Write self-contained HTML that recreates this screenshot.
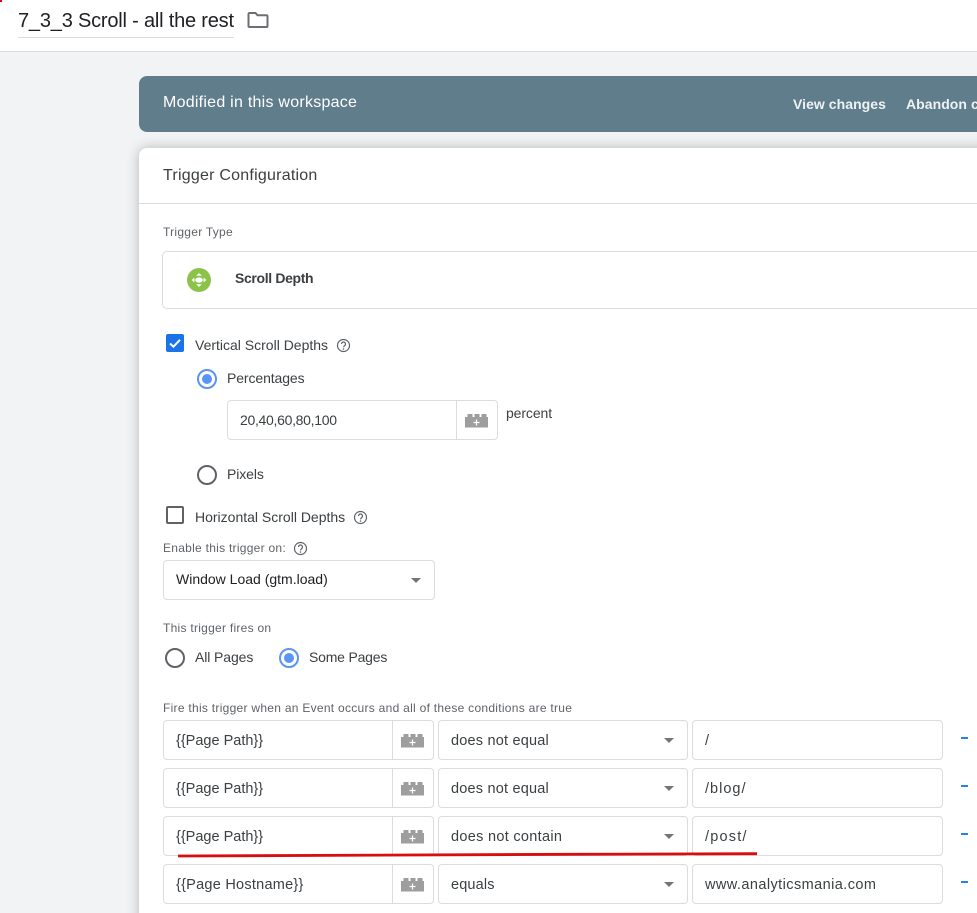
<!DOCTYPE html>
<html><head><meta charset="utf-8">
<style>
html,body{margin:0;padding:0;width:977px;height:913px;overflow:hidden;background:#f1f3f4;font-family:"Liberation Sans",Arial,sans-serif;color:#202124}
#p{position:relative;width:977px;height:913px;overflow:hidden;background:#f1f3f4}
.a{position:absolute;white-space:nowrap}
.t{font-size:14px;line-height:18px;color:#3c4043;letter-spacing:-.1px}
.r{font-size:14.5px;line-height:18px;color:#3c4043;letter-spacing:0}
.lbl{font-size:12px;line-height:14px;color:#5f6368;letter-spacing:.27px}
.box{position:absolute;box-sizing:border-box;border:1px solid #dadce0;border-radius:4px;background:#fff}
.arrow{position:absolute;width:0;height:0;border-left:5px solid transparent;border-right:5px solid transparent;border-top:5px solid #757575}
.minus{position:absolute;left:961px;width:7px;height:2px;background:#2d7de8}
.radio{position:absolute;box-sizing:border-box;width:20px;height:20px;border:2px solid #5f6368;border-radius:50%;background:#fff}
.radio.on{border-color:#5a95f5}
.radio.on:after{content:"";position:absolute;left:3px;top:3px;width:10px;height:10px;border-radius:50%;background:#5a95f5}
svg{position:absolute;display:block}
</style></head><body><div id="p">
<div class="a" style="left:0;top:0;width:977px;height:52px;background:#fff;border-bottom:1px solid #dadce0;box-sizing:border-box"></div>
<div class="a" style="left:0;top:0;width:2px;height:2px;background:#e00"></div>
<div class="a" style="left:18px;top:8px;font-size:20px;line-height:26px;color:#202124;letter-spacing:-.2px">7_3_3 Scroll - all the rest</div>
<div class="a" style="left:18px;top:37px;width:216px;height:1px;background:#dadce0"></div>
<svg style="left:247px;top:11px" width="22" height="18" viewBox="0 0 22 18"><path d="M2.500 2h6l2 2.200h9a1 1 0 0 1 1 1V15a1 1 0 0 1-1 1h-17a1 1 0 0 1-1-1V3a1 1 0 0 1 1-1z" fill="none" stroke="#6b6e72" stroke-width="2"/></svg>

<div class="a" style="left:139px;top:76px;width:860px;height:56px;background:#607d8b;border-radius:8px"></div>
<div class="a" style="left:163px;top:93px;font-size:16px;line-height:20px;color:#fff;letter-spacing:.25px">Modified in this workspace</div>
<div class="a" style="left:793px;top:96px;font-size:14px;line-height:17px;color:#eef2f4;font-weight:bold;letter-spacing:.05px">View changes</div>
<div class="a" style="left:906px;top:96px;font-size:14px;line-height:17px;color:#eef2f4;font-weight:bold;letter-spacing:.05px">Abandon c</div>

<div class="a" style="left:139px;top:148px;width:860px;height:790px;background:#fff;border-radius:8px;box-shadow:0 0 12px rgba(60,64,67,.32)"></div>
<div class="a" style="left:163px;top:166px;font-size:16px;line-height:20px;color:#3c4043;letter-spacing:.23px">Trigger Configuration</div>
<div class="a" style="left:139px;top:203px;width:838px;height:1px;background:#dadce0"></div>

<div class="a lbl" style="left:163px;top:225px">Trigger Type</div>
<div class="box" style="left:162px;top:251px;width:830px;height:58px;border-radius:5px"></div>
<svg style="left:187px;top:268px" width="24" height="24" viewBox="0 0 24 24"><circle cx="12" cy="12" r="12" fill="#8bc34a"/><path d="M12 5l2.800 2.800H9.200zM12 19l-2.800-2.800h5.600zM4.800 12l2.600-2.500v5zM19.200 12l-2.600 2.500v-5z" fill="#fff"/><ellipse cx="12" cy="12" rx="3.800" ry="2.600" fill="#fff"/></svg>
<div class="a" style="left:235px;top:269px;font-size:14px;line-height:18px;font-weight:bold;color:#3c4043;letter-spacing:-.35px">Scroll Depth</div>

<div class="a" style="left:166px;top:334px;width:18px;height:18px;background:#1a73e8;border-radius:2px"></div>
<svg style="left:166px;top:334px" width="18" height="18" viewBox="0 0 18 18"><path d="M4 9.500l3.400 3.200L14 5.800" fill="none" stroke="#fff" stroke-width="2"/></svg>
<div class="a t" style="left:195px;top:336px;letter-spacing:0">Vertical Scroll Depths</div>
<svg style="left:336px;top:338px" width="15" height="15" viewBox="0 0 15 15"><circle cx="7.500" cy="7.500" r="6" fill="none" stroke="#5f6368" stroke-width="1.200"/><path d="M5.500 6a2 2 0 1 1 3.200 1.600c-.8.600-1.200.9-1.200 1.800" fill="none" stroke="#5f6368" stroke-width="1.200"/><circle cx="7.500" cy="11" r=".8" fill="#5f6368"/></svg>

<div class="radio on" style="left:197px;top:369px"></div>
<div class="a t" style="left:227px;top:369px">Percentages</div>
<div class="box" style="left:227px;top:400px;width:271px;height:40px"></div>
<div class="a" style="left:456px;top:401px;width:1px;height:38px;background:#dadce0"></div>
<div class="a t" style="left:240px;top:411px;letter-spacing:-.3px">20,40,60,80,100</div>
<svg style="left:465px;top:413px" width="24" height="15" viewBox="0 0 24 15"><path d="M0 14.500V4h2.500V1h5v3h2V1h5v3h2V1h5v3H23v10.500z" fill="#9e9e9e"/><path d="M11.500 6.500v6M8.500 9.500h6" stroke="#fff" stroke-width="1.200"/></svg>
<div class="a t" style="left:506px;top:404px">percent</div>

<div class="radio" style="left:197px;top:465px"></div>
<div class="a t" style="left:227px;top:465px">Pixels</div>

<div class="a" style="left:166px;top:506px;width:18px;height:18px;box-sizing:border-box;border:2px solid #5f6368;border-radius:2px;background:#fff"></div>
<div class="a t" style="left:195px;top:508px;letter-spacing:0">Horizontal Scroll Depths</div>
<svg style="left:353px;top:510px" width="15" height="15" viewBox="0 0 15 15"><circle cx="7.500" cy="7.500" r="6" fill="none" stroke="#5f6368" stroke-width="1.200"/><path d="M5.500 6a2 2 0 1 1 3.200 1.600c-.8.600-1.200.9-1.200 1.800" fill="none" stroke="#5f6368" stroke-width="1.200"/><circle cx="7.500" cy="11" r=".8" fill="#5f6368"/></svg>

<div class="a lbl" style="left:163px;top:541px">Enable this trigger on:</div>
<svg style="left:293px;top:541px" width="15" height="15" viewBox="0 0 15 15"><circle cx="7.500" cy="7.500" r="6" fill="none" stroke="#5f6368" stroke-width="1.200"/><path d="M5.500 6a2 2 0 1 1 3.200 1.600c-.8.600-1.200.9-1.200 1.800" fill="none" stroke="#5f6368" stroke-width="1.200"/><circle cx="7.500" cy="11" r=".8" fill="#5f6368"/></svg>
<div class="box" style="left:163px;top:560px;width:272px;height:40px"></div>
<div class="a t" style="left:176px;top:570px;color:#202124;letter-spacing:0">Window Load (gtm.load)</div>
<div class="arrow" style="left:411px;top:578px"></div>

<div class="a lbl" style="left:163px;top:621px">This trigger fires on</div>
<div class="radio" style="left:165px;top:648px"></div>
<div class="a t" style="left:195px;top:648px">All Pages</div>
<div class="radio on" style="left:279px;top:648px"></div>
<div class="a t" style="left:309px;top:648px;letter-spacing:-.2px">Some Pages</div>

<div class="a lbl" style="left:163px;top:701px;letter-spacing:.28px">Fire this trigger when an Event occurs and all of these conditions are true</div>

<div class="box" style="left:163px;top:720px;width:271px;height:40px"></div><div class="a" style="left:392px;top:721px;width:1px;height:38px;background:#dadce0"></div><div class="box" style="left:438px;top:720px;width:250px;height:40px"></div><div class="box" style="left:692px;top:720px;width:251px;height:40px"></div>
<div class="a r" style="left:176px;top:732px">{{Page Path}}</div><svg style="left:401px;top:733px" width="24" height="15" viewBox="0 0 24 15"><path d="M0 14.500V4h2.500V1h5v3h2V1h5v3h2V1h5v3H23v10.500z" fill="#9e9e9e"/><path d="M11.500 6.500v6M8.500 9.500h6" stroke="#fff" stroke-width="1.200"/></svg><div class="a r" style="left:451px;top:732px;letter-spacing:.2px">does not equal</div><div class="arrow" style="left:664px;top:738px"></div><div class="a r" style="left:705px;top:732px">/</div><div class="minus" style="top:737px"></div>

<div class="box" style="left:163px;top:768px;width:271px;height:40px"></div><div class="a" style="left:392px;top:769px;width:1px;height:38px;background:#dadce0"></div><div class="box" style="left:438px;top:768px;width:250px;height:40px"></div><div class="box" style="left:692px;top:768px;width:251px;height:40px"></div>
<div class="a r" style="left:176px;top:780px">{{Page Path}}</div><svg style="left:401px;top:781px" width="24" height="15" viewBox="0 0 24 15"><path d="M0 14.500V4h2.500V1h5v3h2V1h5v3h2V1h5v3H23v10.500z" fill="#9e9e9e"/><path d="M11.500 6.500v6M8.500 9.500h6" stroke="#fff" stroke-width="1.200"/></svg><div class="a r" style="left:451px;top:780px;letter-spacing:.2px">does not equal</div><div class="arrow" style="left:664px;top:786px"></div><div class="a r" style="left:705px;top:780px;letter-spacing:1px">/blog/</div><div class="minus" style="top:785px"></div>

<div class="box" style="left:163px;top:816px;width:271px;height:40px"></div><div class="a" style="left:392px;top:817px;width:1px;height:38px;background:#dadce0"></div><div class="box" style="left:438px;top:816px;width:250px;height:40px"></div><div class="box" style="left:692px;top:816px;width:251px;height:40px"></div>
<div class="a r" style="left:176px;top:828px">{{Page Path}}</div><svg style="left:401px;top:829px" width="24" height="15" viewBox="0 0 24 15"><path d="M0 14.500V4h2.500V1h5v3h2V1h5v3h2V1h5v3H23v10.500z" fill="#9e9e9e"/><path d="M11.500 6.500v6M8.500 9.500h6" stroke="#fff" stroke-width="1.200"/></svg><div class="a r" style="left:451px;top:828px;letter-spacing:.3px">does not contain</div><div class="arrow" style="left:664px;top:834px"></div><div class="a r" style="left:705px;top:828px;letter-spacing:1.200px">/post/</div><div class="minus" style="top:833px"></div>

<div class="box" style="left:163px;top:864px;width:271px;height:40px"></div><div class="a" style="left:392px;top:865px;width:1px;height:38px;background:#dadce0"></div><div class="box" style="left:438px;top:864px;width:250px;height:40px"></div><div class="box" style="left:692px;top:864px;width:251px;height:40px"></div>
<div class="a r" style="left:176px;top:876px;letter-spacing:.25px">{{Page Hostname}}</div><svg style="left:401px;top:877px" width="24" height="15" viewBox="0 0 24 15"><path d="M0 14.500V4h2.500V1h5v3h2V1h5v3h2V1h5v3H23v10.500z" fill="#9e9e9e"/><path d="M11.500 6.500v6M8.500 9.500h6" stroke="#fff" stroke-width="1.200"/></svg><div class="a r" style="left:451px;top:876px;letter-spacing:.15px">equals</div><div class="arrow" style="left:664px;top:882px"></div><div class="a r" style="left:705px;top:876px;letter-spacing:.43px">www.analyticsmania.com</div><div class="minus" style="top:881px"></div>

<svg style="left:0;top:0" width="977" height="913" viewBox="0 0 977 913"><path d="M178 856L570 854.300L757 853.700" fill="none" stroke="#d90d0d" stroke-width="2.800"/></svg>
</div></body></html>
